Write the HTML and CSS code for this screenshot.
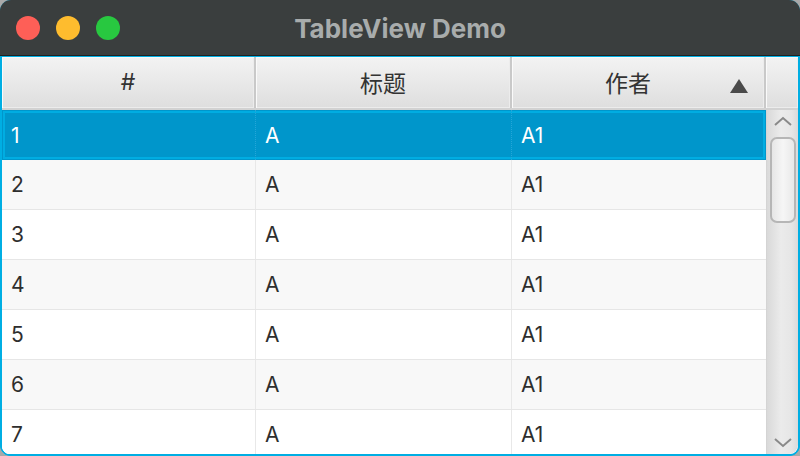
FILE: index.html
```html
<!DOCTYPE html>
<html lang="zh">
<head>
<meta charset="utf-8">
<title>TableView Demo</title>
<link rel="stylesheet" href="styles.css">
</head>
<body>
<div class="window">
  <div class="titlebar">
    <div class="lights">
      <span class="light red"></span>
      <span class="light yellow"></span>
      <span class="light green"></span>
    </div>
    <div class="title">TableView Demo</div>
  </div>
  <div class="content">
    <div class="header">
      <div class="hcell c1">#</div>
      <div class="hcell c2">标题</div>
      <div class="hcell c3"><span class="htext">作者</span><span class="sort"></span></div>
      <div class="hcell corner"></div>
    </div>
    <div class="bodywrap">
      <div class="rows">
        <div class="row selected"><div class="cell c1">1</div><div class="cell c2">A</div><div class="cell c3">A1</div></div>
        <div class="row odd"><div class="cell c1">2</div><div class="cell c2">A</div><div class="cell c3">A1</div></div>
        <div class="row"><div class="cell c1">3</div><div class="cell c2">A</div><div class="cell c3">A1</div></div>
        <div class="row odd"><div class="cell c1">4</div><div class="cell c2">A</div><div class="cell c3">A1</div></div>
        <div class="row"><div class="cell c1">5</div><div class="cell c2">A</div><div class="cell c3">A1</div></div>
        <div class="row odd"><div class="cell c1">6</div><div class="cell c2">A</div><div class="cell c3">A1</div></div>
        <div class="row"><div class="cell c1">7</div><div class="cell c2">A</div><div class="cell c3">A1</div></div>
      </div>
      <div class="scrollbar">
        <svg class="arrow" width="20" height="10" viewBox="0 0 20 10"><polyline points="2,9 10,2 18,9" fill="none" stroke="#8a8a8a" stroke-width="2"/></svg>
        <div class="thumb"></div>
        <div class="spacer"></div>
        <svg class="arrow" width="20" height="10" viewBox="0 0 20 10"><polyline points="2,1 10,8 18,1" fill="none" stroke="#8a8a8a" stroke-width="2"/></svg>
      </div>
    </div>
  </div>
</div>
</body>
</html>
```
FILE: styles.css
```css
* { box-sizing: border-box; }
html, body {
  margin: 0;
  padding: 0;
  background: #a9a9a9;
}
body {
  width: 800px;
  height: 456px;
  overflow: hidden;
  font-family: "Inter", "Noto Sans CJK SC", sans-serif;
}
.window {
  width: 800px;
  height: 456px;
  border-radius: 11px;
  overflow: hidden;
  display: flex;
  flex-direction: column;
  background: #00aee3;
}
.titlebar {
  height: 56px;
  flex: none;
  background: #3a3e3e;
  border-bottom: 1px solid #1f2222;
  display: flex;
  align-items: center;
  position: relative;
}
.lights {
  display: flex;
  gap: 16px;
  padding-left: 16px;
}
.light {
  width: 24px;
  height: 24px;
  border-radius: 50%;
  display: block;
}
.red { background: #fe5f57; }
.yellow { background: #febc2e; }
.green { background: #28c840; }
.title {
  position: absolute;
  left: 0;
  right: 0;
  top: 0;
  bottom: 0;
  display: flex;
  align-items: center;
  justify-content: center;
  color: #a8acac;
  font-weight: 700;
  font-size: 26px;
  padding-top: 1px;
}
.content {
  flex: 1;
  border: 2px solid #00aee3;
  border-top: 1px solid #00aee3;
  border-bottom-width: 2px;
  background: #fff;
  display: flex;
  flex-direction: column;
  overflow: hidden;
  border-radius: 0 0 10px 10px;
}
.header {
  display: flex;
  height: 53px;
  flex: none;
  background: #d2d2d2;
  padding-bottom: 2px;
}
.hcell {
  height: 51px;
  background: linear-gradient(#f3f3f3, #dedede);
  box-shadow: inset 1px 1px 0 #fafafa, inset -1px -1px 0 #ececec;
  border-right: 2px solid #c9c9c9;
  display: flex;
  align-items: center;
  justify-content: center;
  font-size: 23px;
  color: #333;
  padding-bottom: 2px;
}
.hcell.c1 { width: 254px; }
.hcell.c2 { width: 256px; }
.hcell.c3 { width: 254px; position: relative; padding-right: 20px; }
.hcell.corner { width: 32px; border-right: none; }
.sort {
  position: absolute;
  right: 16px;
  top: 22px;
  width: 0;
  height: 0;
  border-left: 9px solid transparent;
  border-right: 9px solid transparent;
  border-bottom: 14px solid #4a4a4a;
}
.bodywrap {
  flex: 1;
  display: flex;
  overflow: hidden;
}
.rows {
  width: 764px;
  display: flex;
  flex-direction: column;
  background: #fff;
}
.row {
  display: flex;
  height: 50px;
  flex: none;
  border-bottom: 1px solid #e6e6e6;
  background: #fff;
}
.row.odd { background: #f8f8f8; }
.cell {
  display: flex;
  align-items: center;
  padding-left: 9px;
  font-size: 21px;
  color: #2e2e2e;
  border-right: 1px solid #e8e8e8;
}
.cell.c1 { width: 254px; }
.cell.c2 { width: 256px; }
.cell.c3 { width: 254px; border-right: none; }
.row.selected {
  background: #0096cb;
  border-bottom: none;
  box-shadow: inset 0 0 0 1px #0096cb, inset 0 0 0 3px #00ade2;
}
.row.selected .cell {
  color: #fff;
  border-right: 1px dotted #24a6d8;
}
.row.selected .cell.c3 { border-right: none; }
.scrollbar {
  width: 32px;
  flex: none;
  background: linear-gradient(90deg, #d9d9d9, #ebebeb 45%, #e6e6e6 80%, #dadada);
  border-left: 1px solid #d4d4d4;
  display: flex;
  flex-direction: column;
  align-items: center;
  padding: 6px 0 6px 1px;
  border-bottom-right-radius: 9px;
}
.arrow { display: block; flex: none; }
.thumb {
  margin-top: 11px;
  width: 26px;
  height: 86px;
  flex: none;
  border: 2px solid #b6b6b6;
  border-radius: 7px;
  background: linear-gradient(90deg, #e6e6e6, #f6f6f6 50%, #e8e8e8);
}
.spacer { flex: 1; }
```
